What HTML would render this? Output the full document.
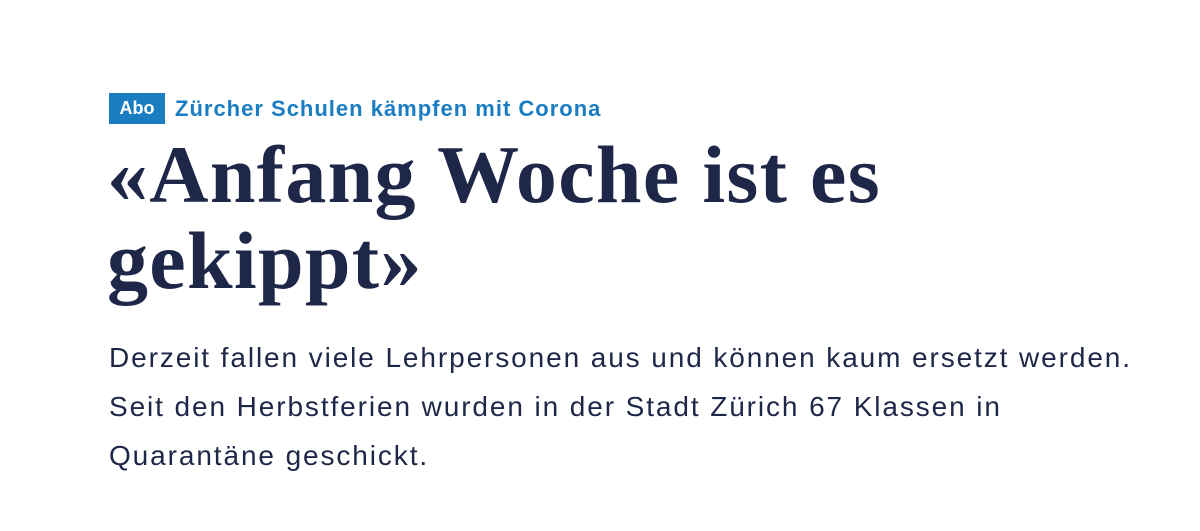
<!DOCTYPE html>
<html><head><meta charset="utf-8"><style>
html,body{margin:0;padding:0;background:#fff;width:1200px;height:531px;overflow:hidden}
.k{position:absolute;left:109px;top:93px;height:31px;display:flex;align-items:center;font-family:"Liberation Sans",sans-serif;font-weight:bold}
.abo{background:#1a7cc1;color:#fff;width:56px;height:31px;line-height:31px;text-align:center;font-size:18px}
.kt{color:#1a7cc1;font-size:22px;margin-left:10px;letter-spacing:1px}
h1{position:absolute;left:107px;top:132px;margin:0;font-family:"Liberation Serif",serif;font-weight:bold;font-size:82px;line-height:86px;color:#1f2749;letter-spacing:1.3px;width:1000px}
p{position:absolute;left:109px;top:333px;margin:0;font-family:"Liberation Sans",sans-serif;font-size:28px;line-height:49px;color:#1f2749;width:1090px;letter-spacing:1.9px;white-space:nowrap}
</style></head><body>
<div class="k"><div class="abo">Abo</div><div class="kt">Zürcher Schulen kämpfen mit Corona</div></div>
<h1>«Anfang Woche ist es<br>gekippt»</h1>
<p>Derzeit fallen viele Lehrpersonen aus und können kaum ersetzt werden.<br>Seit den Herbstferien wurden in der Stadt Zürich 67 Klassen in<br>Quarantäne geschickt.</p>
</body></html>
